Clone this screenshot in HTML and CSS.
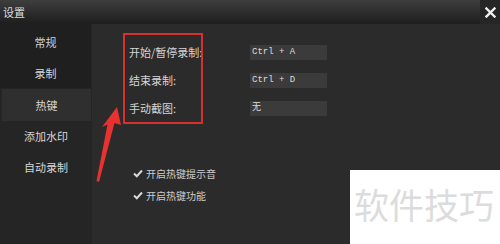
FILE: index.html
```html
<!DOCTYPE html>
<html>
<head>
  <title>设置</title>
  <link rel="stylesheet" href="styles.css">
</head>
<body>
  <div class="window">
    <div class="titlebar">
      <span class="title">设置</span>
      <span class="close">
        <svg width="11" height="11" viewBox="0 0 11 11"><path d="M1.5 1.5 L9.5 9.5 M9.5 1.5 L1.5 9.5" stroke="#f0f0f0" stroke-width="2.4" stroke-linecap="square"/></svg>
      </span>
    </div>

    <div class="body">
      <!-- left menu -->
      <div class="sidebar">
        <div class="group">
          <div class="item">常规</div>
          <div class="item">录制</div>
        </div>
        <div class="item active">热键</div>
        <div class="item">添加水印</div>
        <div class="item">自动录制</div>
      </div>

      <!-- hotkey settings -->
      <div class="content">
        <div class="keys">
          <div class="row">
            <span class="label">开始/暂停录制:</span>
            <span class="field">Ctrl + A</span>
          </div>
          <div class="row">
            <span class="label">结束录制:</span>
            <span class="field">Ctrl + D</span>
          </div>
          <div class="row">
            <span class="label">手动截图:</span>
            <span class="field">无</span>
          </div>
        </div>

        <div class="checks">
          <div class="check">
            <svg width="10" height="9" viewBox="0 0 10 9"><path d="M1 4.5 L3.8 7.2 L9 1.5" fill="none" stroke="#d8d8d8" stroke-width="2"/></svg>
            <span>开启热键提示音</span>
          </div>
          <div class="check">
            <svg width="10" height="9" viewBox="0 0 10 9"><path d="M1 4.5 L3.8 7.2 L9 1.5" fill="none" stroke="#d8d8d8" stroke-width="2"/></svg>
            <span>开启热键功能</span>
          </div>
        </div>
      </div>
    </div>

    <!-- annotation -->
    <div class="mark"></div>
    <svg class="arrow" width="500" height="244" viewBox="0 0 500 244">
      <polygon points="117,107 121,125 114.5,123 99,182 96.5,181 107.5,124.5 102,127" fill="#e8322f"/>
    </svg>

    <div class="watermark">软件技巧</div>
  </div>
</body>
</html>
```

FILE: styles.css
```css
body {
  margin: 0;
  background-color: #2b2b2b;
  font-family: "Noto Sans CJK SC", "Noto Sans", sans-serif;
  color: #d6d6d6;
  font-size: 11px;
}

.window {
  position: relative;
  width: 500px;
  height: 244px;
  overflow: hidden;
  background-color: #2b2b2b;
}

.titlebar {
  height: 24px;
  display: flex;
  align-items: center;
  justify-content: space-between;
  background: linear-gradient(#3e3e3e, #2a2a2a 60%, #1e1e1e);
}

.title {
  padding-left: 3px;
  font-size: 11px;
  color: #dcdcdc;
}

.close {
  width: 20px;
  height: 24px;
  display: flex;
  align-items: center;
  justify-content: center;
  background-color: #262626;
}

.body {
  display: flex;
  height: 220px;
}

.sidebar {
  width: 92px;
  background-color: #252525;
}

.group {
  background-color: #1f1f1f;
  padding-top: 3px;
  margin-right: 1px;
  height: 61px;
}

.item {
  height: 31px;
  line-height: 31px;
  text-align: center;
  font-size: 11px;
  color: #d6d6d6;
}

.item.active {
  margin: 1px 1px 0 2px;
  height: 32px;
  line-height: 32px;
  background-color: #2f2f2f;
}

.content {
  flex: 1;
  padding-top: 14px;
  padding-left: 37px;
}

.row {
  display: flex;
  align-items: center;
  height: 28px;
}

.label {
  width: 121px;
  font-size: 11px;
}

.field {
  width: 75px;
  height: 15px;
  line-height: 15px;
  padding-left: 2px;
  background-color: #3b3b3b;
  font-family: "Liberation Mono", "Noto Sans CJK SC", monospace;
  font-size: 9px;
  color: #dcdcdc;
}

.checks {
  padding-top: 40px;
}

.check {
  display: flex;
  align-items: center;
  height: 22px;
  padding-left: 4px;
  font-size: 10px;
  color: #cccccc;
}

.check svg {
  margin-right: 3px;
}

.mark {
  position: absolute;
  left: 123px;
  top: 33px;
  width: 76px;
  height: 87px;
  border: 2px solid #d8302f;
}

.arrow {
  position: absolute;
  left: 0;
  top: 0;
}

.watermark {
  position: absolute;
  left: 350px;
  top: 170px;
  right: 0;
  bottom: 0;
  background-color: #fff;
  padding: 16px 0 0 4px;
  font-size: 35px;
  line-height: 1;
  color: #dcdcdc;
}
```
